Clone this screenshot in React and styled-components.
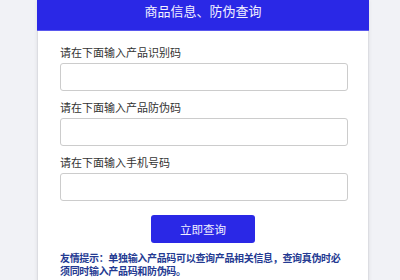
import React from "react";
import styled, { createGlobalStyle } from "styled-components";

const Global = createGlobalStyle`
  html, body { margin: 0; padding: 0; background: #f1f2f6; }
  body { font-family: "Noto Sans CJK SC", "Noto Sans", sans-serif; }
  * { box-sizing: border-box; }
`;

const Page = styled.div`
  width: 400px;
  height: 280px;
  overflow: hidden;
  padding-left: 37px;
  background: #f1f2f6;
`;

const Card = styled.div`
  width: 332px;
  min-height: 300px;
  background: #ffffff;
  border: 1px solid #dcdde2;
  border-top: none;
  box-shadow: 0 0 4px rgba(0, 0, 0, 0.08);
  display: flex;
  flex-direction: column;
`;

const Header = styled.div`
  height: 31px;
  margin: 0 -1px;
  background: #2a28e6;
  border-bottom: 1px solid #5a58ee;
  color: #f2f0ff;
  font-size: 13px;
  line-height: 22px;
  text-align: center;
  padding-bottom: 8px;
`;

const Form = styled.div`
  display: flex;
  flex-direction: column;
  padding: 13px 20px 0 22px;
`;

const Field = styled.div`
  display: flex;
  flex-direction: column;
  gap: 3px;
  margin-bottom: 8px;
`;

const Label = styled.label`
  font-size: 11px;
  line-height: 16px;
  color: #333333;
`;

const Input = styled.input`
  width: 288px;
  height: 28px;
  border: 1px solid #cccccc;
  border-radius: 3px;
  background: #ffffff;
  outline: none;
  padding: 0 8px;
  font-size: 11px;
`;

const ButtonRow = styled.div`
  display: flex;
  justify-content: center;
  padding-top: 6px;
  margin-left: -2px;
`;

const Button = styled.button`
  width: 104px;
  height: 28px;
  border: none;
  border-radius: 3px;
  background: #2a28e6;
  color: #f2f0ff;
  font-family: inherit;
  font-size: 11.5px;
  cursor: pointer;
`;

const Tip = styled.p`
  margin: 8px 0 0;
  width: 288px;
  font-size: 10px;
  letter-spacing: -0.33px;
  line-height: 13px;
  font-weight: 700;
  color: #243a92;
`;

const fields = ["请在下面输入产品识别码", "请在下面输入产品防伪码", "请在下面输入手机号码"];

export default function App() {
  return (
    <>
      <Global />
      <Page>
        <Card>
          <Header>商品信息、防伪查询</Header>
          <Form>
            {fields.map((f) => (
              <Field key={f}>
                <Label>{f}</Label>
                <Input type="text" />
              </Field>
            ))}
            <ButtonRow>
              <Button>立即查询</Button>
            </ButtonRow>
            <Tip>友情提示：单独输入产品码可以查询产品相关信息，查询真伪时必须同时输入产品码和防伪码。</Tip>
          </Form>
        </Card>
      </Page>
    </>
  );
}
